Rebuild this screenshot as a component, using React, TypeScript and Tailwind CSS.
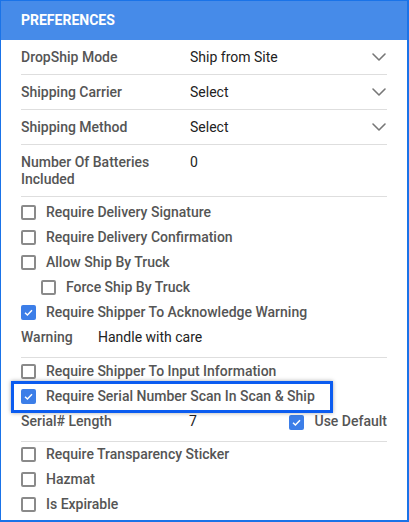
import { ChevronDown } from "lucide-react";

type CheckProps = { checked?: boolean; label: string; indent?: boolean };

function Box({ checked }: { checked?: boolean }) {
  if (checked) {
    return (
      <span className="flex h-[15px] w-[15px] flex-shrink-0 items-center justify-center rounded-[2px] bg-[#3c7ee8]">
        <svg viewBox="0 0 12 12" className="h-[11px] w-[11px]">
          <path d="M2.2 6.2 4.8 8.7 9.8 3.5" fill="none" stroke="white" strokeWidth="1.6" />
        </svg>
      </span>
    );
  }
  return <span className="h-[15px] w-[15px] flex-shrink-0 rounded-[2px] border-2 border-[#8a8a8a] bg-white" />;
}

function Check({ checked, label, indent }: CheckProps) {
  return (
    <div className={`flex h-[25px] items-center gap-[10px] ${indent ? "pl-[20px]" : ""}`}>
      <Box checked={checked} />
      <span className="text-[14px] font-medium text-[#555]">{label}</span>
    </div>
  );
}

function SelectRow({ label, value }: { label: string; value: string }) {
  return (
    <div className="flex h-[35px] items-center border-b border-[#dedede]">
      <span className="w-[169px] text-[14px] font-medium text-[#555]">{label}</span>
      <span className="flex-1 text-[14px] text-[#222]">{value}</span>
      <ChevronDown className="-mr-[4px] h-6 w-6 text-[#777]" strokeWidth={1.6} />
    </div>
  );
}

export default function App() {
  return (
    <div className="h-[522px] w-[409px] border-b-2 border-l border-r-2 border-t border-[#1a73e8] bg-white font-['Roboto',sans-serif]">
      <div className="flex h-[39px] items-center bg-[#468be9] px-[20px] text-[14px] font-bold uppercase text-white">
        Preferences
      </div>
      <div className="px-[20px]">
        <SelectRow label="DropShip Mode" value="Ship from Site" />
        <SelectRow label="Shipping Carrier" value="Select" />
        <SelectRow label="Shipping Method" value="Select" />

        <div className="flex border-b border-[#dedede] pb-[8px] pt-[9px]">
          <span className="w-[169px] pr-4 text-[14px] font-medium leading-[17px] text-[#555]">
            Number Of Batteries Included
          </span>
          <span className="text-[14px] leading-[17px] text-[#222]">0</span>
        </div>

        <div className="border-b border-[#dedede] pb-[7px] pt-[3px]">
          <Check label="Require Delivery Signature" />
          <Check label="Require Delivery Confirmation" />
          <Check label="Allow Ship By Truck" />
          <Check label="Force Ship By Truck" indent />
          <Check label="Require Shipper To Acknowledge Warning" checked />
          <div className="flex h-[25px] items-center">
            <span className="w-[77px] text-[14px] font-medium text-[#555]">Warning</span>
            <span className="text-[14px] text-[#222]">Handle with care</span>
          </div>
        </div>

        <div className="border-b border-[#dedede] pb-[7px] pt-[1px]">
          <Check label="Require Shipper To Input Information" />
          <div className="relative">
            <Check label="Require Serial Number Scan In Scan & Ship" checked />
            <div className="pointer-events-none absolute -left-[10px] -top-[3px] h-[32px] w-[322px] border-[3px] border-[#0b5cf0] shadow-[0_0_4px_rgba(0,0,0,0.35)]" />
          </div>
          <div className="flex h-[25px] items-center">
            <span className="w-[169px] text-[14px] font-medium text-[#555]">Serial# Length</span>
            <span className="w-[100px] text-[14px] text-[#222]">7</span>
            <div className="flex items-start gap-[11px] whitespace-nowrap">
              <span className="mt-[4px]">
                <Box checked />
              </span>
              <span className="text-[14px] font-medium text-[#555]">Use Default</span>
            </div>
          </div>
        </div>

        <div>
          <Check label="Require Transparency Sticker" />
          <Check label="Hazmat" />
          <Check label="Is Expirable" />
        </div>
      </div>
    </div>
  );
}
